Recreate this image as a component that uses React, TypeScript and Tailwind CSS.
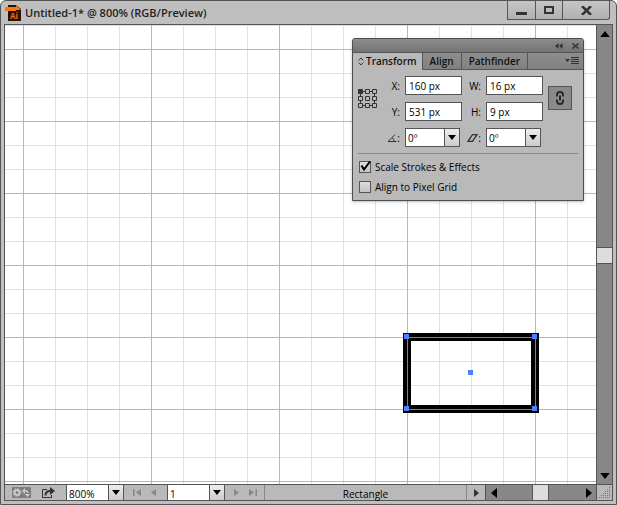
import type { ReactNode } from "react";
import clsx from "clsx";

const MINOR_X = Array.from({ length: 19 }, (_, i) => 18 + i * 32);
const MINOR_Y = Array.from({ length: 20 }, (_, i) => i * 24);

function ArrowDown({ className }: { className?: string }) {
  return (
    <svg viewBox="0 0 8 5" className={clsx("h-[5px] w-2", className)} aria-hidden>
      <path d="M0 0h8L4 5z" fill="currentColor" />
    </svg>
  );
}

interface ComboProps {
  label: string;
  value: string;
  options: string[];
  className?: string;
}

function Combo({ label, value, options, className }: ComboProps) {
  return (
    <div className={clsx("relative flex border-[#555] bg-white text-black", className)}>
      <select
        aria-label={label}
        defaultValue={value}
        className="w-full appearance-none bg-transparent pl-[2px] outline-none"
      >
        {options.map((option) => (
          <option key={option}>{option}</option>
        ))}
      </select>
      <span className="pointer-events-none absolute inset-y-0 right-0 flex w-[15px] items-center justify-center border-l border-[#555] bg-linear-to-b from-[#eee] to-[#ccc]">
        <ArrowDown />
      </span>
    </div>
  );
}

function Field({ id, label, value }: { id: string; label: string; value: string }) {
  return (
    <>
      <label htmlFor={id} className="text-right">
        {label}
      </label>
      <input
        id={id}
        defaultValue={value}
        className="h-[19px] w-[57px] border border-[#555] bg-white pl-[3px] outline-none"
      />
    </>
  );
}

function Check({ label, checked }: { label: string; checked?: boolean }) {
  return (
    <label className="flex h-5 items-center gap-1">
      <span className="relative flex">
        <input
          type="checkbox"
          defaultChecked={checked}
          className="peer size-3 appearance-none border border-[#555] bg-linear-to-b from-[#ddd] to-[#c4c4c4]"
        />
        <svg
          viewBox="0 0 12 12"
          className="pointer-events-none absolute inset-0 hidden size-3 overflow-visible peer-checked:block"
          aria-hidden
        >
          <path d="M2.5 4.500L5 8.500l6-8" fill="none" stroke="#000" strokeWidth="2" />
        </svg>
      </span>
      {label}
    </label>
  );
}

function Tab({ active, children }: { active?: boolean; children: ReactNode }) {
  return (
    <button
      type="button"
      role="tab"
      aria-selected={!!active}
      className={clsx(
        "flex items-center border-r border-[#555]",
        active ? "gap-[2px] bg-[#b9b9b9] px-[5px]" : "border-b bg-linear-to-b from-[#8e8e8e] to-[#808080] px-[7px]",
      )}
    >
      {children}
    </button>
  );
}

function ReferencePoint() {
  return (
    <svg viewBox="0 0 19 19" className="mt-[13px] size-[19px]" fill="none" stroke="#333" aria-hidden>
      <path d="M5 2.5h2M12 2.5h2M5 16.5h2M12 16.5h2M2.5 5v2M2.5 12v2M16.5 5v2M16.5 12v2" />
      <path d="M.5.5h4v4h-4z" fill="#333" />
      <path d="M7.5.5h4v4h-4zM14.5.5h4v4h-4zM.5 7.5h4v4h-4zM7.5 7.5h4v4h-4zM14.5 7.5h4v4h-4zM.5 14.5h4v4h-4zM7.5 14.5h4v4h-4zM14.5 14.5h4v4h-4z" />
    </svg>
  );
}

function TransformPanel() {
  return (
    <section
      aria-label="Transform"
      className="absolute top-[13px] right-3 w-[232px] overflow-hidden rounded-t-[3px] border border-[#4d4d4d] bg-[#b9b9b9] text-black shadow-[0_1px_3px_rgba(0,0,0,0.25)]"
    >
      <header className="flex h-[14px] items-center justify-end gap-[9px] border-b border-[#555] bg-linear-to-b from-[#8d8d8d] to-[#737373] pr-1">
        <button type="button" aria-label="Collapse">
          <svg viewBox="0 0 8 6" className="h-[6px] w-2" fill="#333" aria-hidden>
            <path d="M3.5 0v6L0 3zM7.5 0v6L4 3z" />
          </svg>
        </button>
        <button type="button" aria-label="Close panel">
          <svg viewBox="0 0 7 6" className="h-[6px] w-[7px]" fill="none" stroke="#333" strokeWidth="1.5" aria-hidden>
            <path d="M.5.5l6 5M6.5.5l-6 5" />
          </svg>
        </button>
      </header>
      <div role="tablist" className="flex h-[17px] text-[10px] font-semibold text-[#111]">
        <Tab active>
          <svg viewBox="0 0 6 9" className="h-[9px] w-[6px]" fill="none" stroke="#333" aria-hidden>
            <path d="M.7 3.5L3 1l2.3 2.5M.7 5.5L3 8l2.3-2.5" />
          </svg>
          Transform
        </Tab>
        <Tab>Align</Tab>
        <Tab>Pathfinder</Tab>
        <button
          type="button"
          aria-label="Panel menu"
          className="flex flex-1 items-center justify-end border-b border-[#555] bg-linear-to-b from-[#8e8e8e] to-[#808080] pr-1"
        >
          <svg viewBox="0 0 14 8" className="h-2 w-[14px]" aria-hidden>
            <path d="M0 2h5L2.5 5z" fill="#333" />
            <path d="M6 .5h8M6 2.5h8M6 4.5h8M6 6.5h8" stroke="#333" />
          </svg>
        </button>
      </div>
      <div className="px-[5px] pb-[3px] text-[10px] leading-4">
        <div className="flex border-b border-[#888] pt-[6px] pb-[6px]">
          <ReferencePoint />
          <div className="mr-[5px] grid grid-cols-[23px_57px_14px_57px] items-center gap-x-[5px] gap-y-[7px]">
            <Field id="x" label="X:" value="160 px" />
            <Field id="w" label="W:" value="16 px" />
            <Field id="y" label="Y:" value="531 px" />
            <Field id="h" label="H:" value="9 px" />
            <span className="flex items-center justify-end">
              <svg viewBox="0 0 10 8" className="h-2 w-[10px]" fill="none" stroke="#333" aria-hidden>
                <path d="M9.5 7.5H1L8 .7M5 3.5c1.5 1 2 2.5 2 4" />
              </svg>
              :
            </span>
            <Combo label="Rotate" value="0º" options={["0º", "45º", "90º"]} className="h-[19px] w-[55px] border" />
            <span className="flex items-center justify-end">
              <svg viewBox="0 0 11 8" className="h-2 w-[11px]" fill="none" stroke="#333" strokeWidth="1.3" aria-hidden>
                <path d="M1 7.300h4.500L10 .7H5.500z" />
              </svg>
              :
            </span>
            <Combo label="Shear" value="0º" options={["0º", "15º", "30º"]} className="h-[19px] w-[55px] border" />
          </div>
          <button
            type="button"
            aria-label="Constrain proportions"
            className="mt-[10px] flex size-6 items-center justify-center border border-[#555] bg-[#8a8a8a]"
          >
            <svg viewBox="0 0 8 14" className="h-[14px] w-2" fill="none" stroke="#2a2a2a" strokeWidth="2" aria-hidden>
              <path d="M1 5.500V4a3 3 0 0 1 6 0v1.500M1 8.500V10a3 3 0 0 0 6 0V8.500M4 4.500v5" />
            </svg>
          </button>
        </div>
        <div className="pt-[3px] pl-px">
          <Check label="Scale Strokes & Effects" checked />
          <Check label="Align to Pixel Grid" />
        </div>
      </div>
    </section>
  );
}

function Canvas() {
  return (
    <main className="relative min-w-0 flex-1 overflow-hidden bg-white">
      <svg className="absolute inset-0 size-full" shapeRendering="crispEdges" aria-hidden>
        {MINOR_X.map((x) => (
          <rect key={x} x={x} y="0" width="1" height="100%" fill="#efd5fa" />
        ))}
        {MINOR_Y.map((y) => (
          <rect key={y} x="0" y={y} width="100%" height="1" fill="#efd5fa" />
        ))}
        {MINOR_X.filter((_, i) => i % 4 === 0).map((x) => (
          <rect key={x} x={x} y="0" width="1" height="100%" fill="#e096f8" />
        ))}
        {MINOR_Y.filter((_, i) => i % 3 === 1).map((y) => (
          <rect key={y} x="0" y={y} width="100%" height="1" fill="#e096f8" />
        ))}
        <rect x="402" y="312" width="128" height="72" fill="none" stroke="#000" strokeWidth="8" />
        <path d="M402 312h129v73H402zM403 313v71h127v-71z" fill="#4f80ff" fillRule="evenodd" />
        <path d="M399 309h5v5h-5zM527 309h5v5h-5zM399 381h5v5h-5zM527 381h5v5h-5zM463 345h5v5h-5z" fill="#4f80ff" />
      </svg>
      <TransformPanel />
    </main>
  );
}

function TitleBar() {
  const button = "flex h-[19px] items-center justify-center border-r border-b border-[#555] bg-linear-to-b from-[#c6c6c6] to-[#b0b0b0]";
  return (
    <header className="flex h-[23px] shrink-0 items-start justify-between pr-[6px] pl-1">
      <div className="flex h-6 items-center gap-1 text-[11px] font-semibold text-[#222]">
        <svg viewBox="0 0 16 16" className="size-4" aria-hidden>
          <path d="M3 0h8l5 4v12H3z" fill="#2a1206" />
          <path d="M0 2h11v4H0zM11 0l5 5h-5z" fill="#f47a10" />
          <text x="5" y="14" fontSize="8" fontWeight="700" fill="#f06a1a" fontFamily="Open Sans">
            Ai
          </text>
        </svg>
        <h1>Untitled-1* @ 800% (RGB/Preview)</h1>
      </div>
      <div className="flex border-l border-[#555]">
        <button type="button" aria-label="Minimize" className={clsx(button, "w-7")}>
          <svg viewBox="0 0 11 9" className="h-[9px] w-[11px]" aria-hidden>
            <path d="M0 6h11v3H0z" fill="#333" />
          </svg>
        </button>
        <button type="button" aria-label="Maximize" className={clsx(button, "w-[27px]")}>
          <svg viewBox="0 0 10 8" className="h-2 w-[10px]" fill="none" stroke="#333" strokeWidth="2" aria-hidden>
            <path d="M1 1h8v6H1z" />
          </svg>
        </button>
        <button type="button" aria-label="Close" className={clsx(button, "w-[47px] rounded-br-[3px]")}>
          <svg viewBox="0 0 11 9" className="h-[9px] w-[11px]" fill="none" stroke="#333" strokeWidth="2.500" aria-hidden>
            <path d="M1 0l9 9M10 0L1 9" />
          </svg>
        </button>
      </div>
    </header>
  );
}

function VerticalScroll() {
  return (
    <div className="flex w-4 shrink-0 flex-col items-center border-l border-[#555] bg-[#878787]">
      <button type="button" aria-label="Scroll up" className="flex h-[17px] items-center">
        <ArrowDown className="h-[6px] w-[10px] rotate-180" />
      </button>
      <div className="flex w-full flex-1 flex-col">
        <span className="flex-[205]" />
        <span className="h-[17px] border-y border-[#555] bg-[#ddd]" />
        <span className="flex-[203]" />
      </div>
      <button type="button" aria-label="Scroll down" className="flex h-[17px] items-center">
        <ArrowDown className="h-[6px] w-[10px]" />
      </button>
    </div>
  );
}

function NavButton({ label, d, className }: { label: string; d: string; className?: string }) {
  return (
    <button type="button" aria-label={label} className={clsx("text-[#888]", className)}>
      <svg viewBox="0 0 9 7" className="h-[7px] w-[9px]" fill="currentColor" aria-hidden>
        <path d={d} />
      </svg>
    </button>
  );
}

function StatusBar() {
  return (
    <footer className="flex h-4 shrink-0 border-t border-[#555] text-[10px] leading-3 text-black">
      <div className="flex items-center pl-[7px]">
        <button type="button" aria-label="Sync settings">
          <svg viewBox="0 0 19 11" className="h-[11px] w-[19px]" aria-hidden>
            <rect width="19" height="11" rx="1" fill="#7e7e7e" />
            <circle cx="5" cy="5.500" r="2.500" fill="none" stroke="#ccc" strokeWidth="2" />
            <circle cx="5" cy="5.500" r="4" fill="none" stroke="#ccc" strokeDasharray="1.500 1.640" />
            <path d="M10 4l3-3v2c2.500 0 3.500 1 3.500 3H15c0-1-.5-1.500-2-1.500V7zM18 7l-2.500 3L13 7z" fill="#ccc" />
          </svg>
        </button>
        <button type="button" aria-label="Share" className="ml-[11px]">
          <svg viewBox="0 0 13 11" className="h-[11px] w-[13px]" fill="none" stroke="#333" aria-hidden>
            <path d="M5 2.500H.5v8h9V8" />
            <path d="M3.500 8.500C3.500 5.500 5 4 8 4" strokeWidth="2" />
            <path d="M8 0l5 4-5 4z" fill="#333" stroke="none" />
          </svg>
        </button>
      </div>
      <Combo
        label="Zoom"
        value="800%"
        options={["400%", "800%", "1600%"]}
        className="ml-[11px] w-[58px] border-x pt-[3px]"
      />
      <div className="flex items-center gap-[7px] px-[9px]">
        <NavButton label="First" d="M0 0h1.500v7H0zM8 0v7L3 3.500z" />
        <NavButton label="Previous" d="M7 0v7L2 3.500z" />
      </div>
      <Combo label="Artboard" value="1" options={["1"]} className="w-[58px] border-x pt-[3px]" />
      <div className="flex items-center gap-[7px] px-[7px]">
        <NavButton label="Next" d="M2 0v7l5-3.500z" />
        <NavButton label="Last" d="M7.500 0H9v7H7.500zM1 0v7l5-3.500z" />
      </div>
      <p className="flex flex-1 items-center justify-center border-x border-[#888] pt-[3px]">Rectangle</p>
      <button type="button" aria-label="Status menu" className="flex w-[18px] items-center justify-center">
        <svg viewBox="0 0 5 8" className="h-2 w-[5px]" fill="#333" aria-hidden>
          <path d="M0 0v8l5-4z" />
        </svg>
      </button>
      <div className="flex w-[112px] border-x border-[#555] bg-[#878787]">
        <button type="button" aria-label="Scroll left" className="flex w-[15px] items-center justify-center">
          <svg viewBox="0 0 6 10" className="h-[10px] w-[6px]" aria-hidden>
            <path d="M6 0v10L0 5z" />
          </svg>
        </button>
        <div className="flex flex-1">
          <span className="flex-[31]" />
          <span className="w-[17px] border-x border-[#555] bg-[#ddd]" />
          <span className="flex-[32]" />
        </div>
        <button type="button" aria-label="Scroll right" className="flex w-[15px] items-center justify-center">
          <svg viewBox="0 0 6 10" className="h-[10px] w-[6px]" aria-hidden>
            <path d="M0 0v10l6-5z" />
          </svg>
        </button>
      </div>
      <div className="flex w-[15px] items-end justify-end p-[2px]">
        <svg viewBox="0 0 11 11" className="size-[11px]" stroke="#777" strokeDasharray="1 1" aria-hidden>
          <path d="M10 .5h1M8 2.500h3M6 4.500h5M4 6.500h7M2 8.500h9M0 10.500h11" />
        </svg>
      </div>
    </footer>
  );
}

export default function App() {
  return (
    <div className="flex h-screen flex-col rounded-t-md border border-[#555] bg-[#bfbfbf] font-['Open_Sans',sans-serif]">
      <TitleBar />
      <div className="mx-[3px] mb-[3px] flex min-h-0 flex-1 flex-col border border-t-0 border-[#555] bg-[#b9b9b9]">
        <div className="flex min-h-0 flex-1 border-t border-[#555]">
          <Canvas />
          <VerticalScroll />
        </div>
        <StatusBar />
      </div>
    </div>
  );
}
